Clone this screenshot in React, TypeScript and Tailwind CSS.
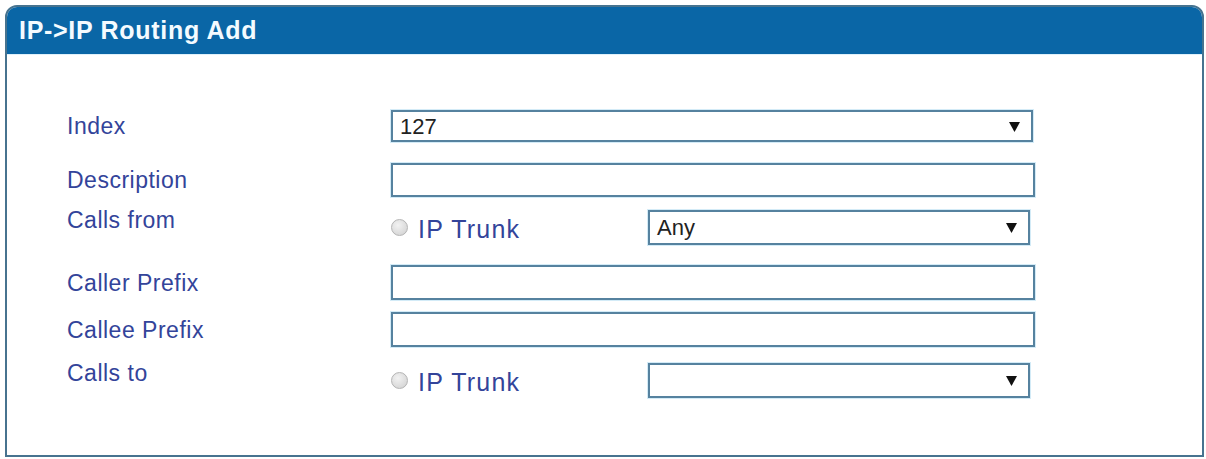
const labelCls =
  "w-[324px] shrink-0 text-[23px] leading-[26px] text-[#33449a] tracking-[0.5px]";

const boxCls =
  "border-2 border-[#56829f] bg-white shadow-[0_0_0_1px_#d3ebf7]";

function Arrow() {
  return (
    <svg width="11" height="11" viewBox="0 0 10 10" className="shrink-0">
      <path d="M0 1 L10 1 L5 10 Z" fill="#111" />
    </svg>
  );
}

function FakeSelect({ value, width }: { value?: string; width: string }) {
  return (
    <div
      className={`${boxCls} ${width} h-full flex items-center justify-between pl-[7px] pr-[11px] text-[22px] text-[#222]`}
    >
      <span>{value}</span>
      <Arrow />
    </div>
  );
}

function TextBox() {
  return <div className={`${boxCls} w-[644px] h-full`}></div>;
}

function Radio() {
  return (
    <div className="w-[17px] h-[17px] rounded-full border border-[#b4b4b4] bg-[radial-gradient(circle_at_40%_35%,#f2f2f2,#cfcfcf)] shrink-0"></div>
  );
}

function TrunkRow({ label, value }: { label: string; value?: string }) {
  return (
    <div className="flex h-[35px]">
      <div className={`${labelCls} self-start -mt-[3px]`}>{label}</div>
      <div className="flex items-center h-full">
        <Radio />
        <span className="ml-[10px] mt-[5px] w-[230px] text-[25px] tracking-[1.2px] text-[#33449a]">
          IP Trunk
        </span>
        <FakeSelect value={value} width="w-[382px]" />
      </div>
    </div>
  );
}

export default function App() {
  return (
    <div
      className="w-[1206px] h-[459px] bg-white pt-[5px] pl-[5px]"
      style={{ fontFamily: '"Liberation Sans", Arial, sans-serif' }}
    >
      <div className="w-[1199px] h-[452px] border-2 border-[#47738f] rounded-t-[12px] overflow-hidden flex flex-col">
        {/* Header */}
        <div className="h-[48px] bg-[#0a66a6] border-b border-[#dff1fb] flex items-center pl-[12px]">
          <span className="text-[25px] font-bold text-[#f4fbff] tracking-[0.7px]">
            IP-&gt;IP Routing Add
          </span>
        </div>

        {/* Form */}
        <div className="flex-1 pt-[55px] pl-[60px]">
          <div className="flex items-center h-[32px]">
            <div className={labelCls}>Index</div>
            <FakeSelect value="127" width="w-[642px]" />
          </div>

          <div className="flex items-center h-[34px] mt-[21px]">
            <div className={labelCls}>Description</div>
            <TextBox />
          </div>

          <div className="mt-[13px]">
            <TrunkRow label="Calls from" value="Any" />
          </div>

          <div className="flex items-center h-[35px] mt-[20px]">
            <div className={labelCls}>Caller Prefix</div>
            <TextBox />
          </div>

          <div className="flex items-center h-[35px] mt-[12px]">
            <div className={labelCls}>Callee Prefix</div>
            <TextBox />
          </div>

          <div className="mt-[16px]">
            <TrunkRow label="Calls to" />
          </div>
        </div>
      </div>
    </div>
  );
}
